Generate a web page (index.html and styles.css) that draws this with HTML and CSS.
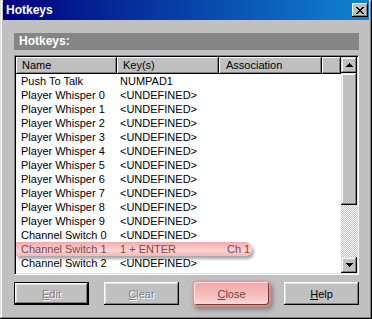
FILE: index.html
```html
<!DOCTYPE html>
<html>
<head>
  <title>Hotkeys</title>
  <link rel="stylesheet" href="styles.css">
</head>
<body>
  <div class="window">
    <div class="titlebar">
      <span class="title">Hotkeys</span>
      <div class="close-x">
        <svg width="8" height="7" viewBox="0 0 8 7" shape-rendering="crispEdges">
          <path d="M0 0h2v1h-2zM6 0h2v1h-2zM1 1h2v1h-2zM5 1h2v1h-2zM2 2h4v1h-4zM3 3h2v1h-2zM2 4h4v1h-4zM1 5h2v1h-2zM5 5h2v1h-2zM0 6h2v1h-2zM6 6h2v1h-2z" fill="#000"/>
        </svg>
      </div>
    </div>

    <div class="content">
      <div class="group-title">Hotkeys:</div>

      <div class="listbox">
        <div class="list-main">
          <div class="list-head">
            <div class="hcol name">Name</div>
            <div class="hcol key">Key(s)</div>
            <div class="hcol assoc">Association</div>
            <div class="hcol filler"></div>
          </div>
          <div class="rows">
            <div class="row"><span class="name">Push To Talk</span><span class="key">NUMPAD1</span><span class="assoc"></span></div>
            <div class="row"><span class="name">Player Whisper 0</span><span class="key">&lt;UNDEFINED&gt;</span><span class="assoc"></span></div>
            <div class="row"><span class="name">Player Whisper 1</span><span class="key">&lt;UNDEFINED&gt;</span><span class="assoc"></span></div>
            <div class="row"><span class="name">Player Whisper 2</span><span class="key">&lt;UNDEFINED&gt;</span><span class="assoc"></span></div>
            <div class="row"><span class="name">Player Whisper 3</span><span class="key">&lt;UNDEFINED&gt;</span><span class="assoc"></span></div>
            <div class="row"><span class="name">Player Whisper 4</span><span class="key">&lt;UNDEFINED&gt;</span><span class="assoc"></span></div>
            <div class="row"><span class="name">Player Whisper 5</span><span class="key">&lt;UNDEFINED&gt;</span><span class="assoc"></span></div>
            <div class="row"><span class="name">Player Whisper 6</span><span class="key">&lt;UNDEFINED&gt;</span><span class="assoc"></span></div>
            <div class="row"><span class="name">Player Whisper 7</span><span class="key">&lt;UNDEFINED&gt;</span><span class="assoc"></span></div>
            <div class="row"><span class="name">Player Whisper 8</span><span class="key">&lt;UNDEFINED&gt;</span><span class="assoc"></span></div>
            <div class="row"><span class="name">Player Whisper 9</span><span class="key">&lt;UNDEFINED&gt;</span><span class="assoc"></span></div>
            <div class="row"><span class="name">Channel Switch 0</span><span class="key">&lt;UNDEFINED&gt;</span><span class="assoc"></span></div>
            <div class="row marked"><span class="name">Channel Switch 1</span><span class="key">1 + ENTER</span><span class="assoc">Ch 1</span></div>
            <div class="row"><span class="name">Channel Switch 2</span><span class="key">&lt;UNDEFINED&gt;</span><span class="assoc"></span></div>
            <div class="row"><span class="name">Channel Switch 3</span><span class="key">&lt;UNDEFINED&gt;</span><span class="assoc"></span></div>
          </div>
        </div>

        <div class="scrollbar">
          <div class="sb-btn">
            <svg width="7" height="4" viewBox="0 0 7 4" shape-rendering="crispEdges"><path d="M3 0h1v1h1v1h1v1h1v1h-7v-1h1v-1h1v-1h1z" fill="#000"/></svg>
          </div>
          <div class="sb-track">
            <div class="sb-thumb"></div>
          </div>
          <div class="sb-btn">
            <svg width="7" height="4" viewBox="0 0 7 4" shape-rendering="crispEdges"><path d="M0 0h7v1h-1v1h-1v1h-1v1h-1v-1h-1v-1h-1v-1h-1z" fill="#000"/></svg>
          </div>
        </div>
      </div>

      <div class="buttons">
        <div class="btn default disabled"><span><u>E</u>dit</span></div>
        <div class="btn disabled"><span><u>C</u>lear</span></div>
        <div class="btn marked"><span><u>C</u>lose</span></div>
        <div class="btn"><span><u>H</u>elp</span></div>
      </div>
    </div>
  </div>
</body>
</html>
```

FILE: styles.css
```css
body {
  margin: 0;
  background-color: #c0c0c0;
  font-family: "Liberation Sans", Arial, sans-serif;
  font-size: 11px;
  color: black;
}

.window {
  width: 372px;
  height: 319px;
  box-sizing: border-box;
  background-color: #c0c0c0;
  box-shadow: inset -1px -1px #000, inset 1px 1px #dfdfdf, inset -2px -2px #808080, inset 2px 2px #fff;
  overflow: hidden;
}

.titlebar {
  height: 20px;
  margin: 0 3px;
  padding: 0 1px 0 3px;
  display: flex;
  align-items: center;
  justify-content: space-between;
  background: linear-gradient(to right, #000080, #1084d0);
}

.title {
  color: white;
  font-weight: bold;
  font-size: 12px;
}

.close-x {
  width: 16px;
  height: 14px;
  box-sizing: border-box;
  display: flex;
  align-items: center;
  justify-content: center;
  background-color: #c0c0c0;
  box-shadow: inset -1px -1px #000, inset 1px 1px #fff, inset -2px -2px #808080;
}

.content {
  padding: 13px 13px 0 14px;
}

.group-title {
  height: 17px;
  line-height: 17px;
  padding-left: 5px;
  background-color: #858585;
  color: white;
  font-weight: bold;
  font-size: 12px;
  margin-bottom: 5px;
}

.listbox {
  height: 220px;
  box-sizing: border-box;
  display: flex;
  border-top: 1px solid #808080;
  border-left: 1px solid #808080;
  border-right: 1px solid #fff;
  border-bottom: 1px solid #fff;
  box-shadow: inset 1px 1px #000, inset -1px -1px #dfdfdf;
  padding: 1px;
  background-color: white;
}

.list-main {
  flex: 1;
  overflow: hidden;
}

.list-head {
  display: flex;
  height: 17px;
}

.hcol {
  box-sizing: border-box;
  height: 17px;
  line-height: 16px;
  padding-left: 6px;
  background-color: #c0c0c0;
  box-shadow: inset -1px -1px #000, inset 1px 1px #fff, inset -2px -2px #808080;
}

.hcol.name { width: 101px; }
.hcol.key { width: 102px; }
.hcol.assoc { width: 103px; padding-left: 7px; }
.hcol.filler { flex: 1; }

.row {
  position: relative;
  display: flex;
  height: 14px;
  line-height: 14px;
}

.row span {
  position: relative;
  z-index: 1;
  white-space: nowrap;
  overflow: hidden;
}

.row .name { width: 101px; padding-left: 5px; box-sizing: border-box; }
.row .key { width: 102px; padding-left: 3px; box-sizing: border-box; }
.row .assoc { width: 103px; padding-left: 8px; box-sizing: border-box; }

/* pink tutorial marker over the row */
.row.marked::before {
  content: "";
  position: absolute;
  left: 0;
  top: 0;
  width: 236px;
  height: 14px;
  border-radius: 0 8px 8px 0;
  background: linear-gradient(#f4aaaa, #fbd3d3 60%, #f5b8b8);
  box-shadow: 2px 3px 3px rgba(0, 0, 0, 0.35);
}

.row.marked span {
  color: #7a4a4a;
}

.scrollbar {
  width: 16px;
  display: flex;
  flex-direction: column;
}

.sb-btn {
  width: 16px;
  height: 16px;
  box-sizing: border-box;
  display: flex;
  align-items: center;
  justify-content: center;
  background-color: #c0c0c0;
  box-shadow: inset -1px -1px #000, inset 1px 1px #dfdfdf, inset -2px -2px #808080, inset 2px 2px #fff;
}

.sb-track {
  flex: 1;
  background: repeating-conic-gradient(#c0c0c0 0 25%, #fff 0 50%) 0 0 / 2px 2px;
}

.sb-thumb {
  height: 132px;
  box-sizing: border-box;
  background-color: #c0c0c0;
  box-shadow: inset -1px -1px #000, inset 1px 1px #dfdfdf, inset -2px -2px #808080, inset 2px 2px #fff;
}

.buttons {
  display: flex;
  gap: 15px;
  margin-top: 7px;
}

.btn {
  position: relative;
  width: 75px;
  height: 23px;
  box-sizing: border-box;
  display: flex;
  align-items: center;
  justify-content: center;
  background-color: #c0c0c0;
  box-shadow: inset -1px -1px #000, inset 1px 1px #fff, inset -2px -2px #808080, inset 2px 2px #dfdfdf;
}

.btn.default {
  border: 1px solid #000;
}

.btn.disabled span {
  color: #808080;
  text-shadow: 1px 1px #fff;
}

.btn.marked {
  background: linear-gradient(#f2a6a6, #f7c4c4 70%, #fbdede);
  box-shadow: inset -1px -1px #7a3a3a, inset 1px 1px #fbe0e0, 0 0 0 2px rgba(240, 150, 150, 0.6), 2px 3px 4px 2px rgba(0, 0, 0, 0.3);
  border-radius: 3px;
}

.btn.marked span {
  color: #6e4646;
}
```
